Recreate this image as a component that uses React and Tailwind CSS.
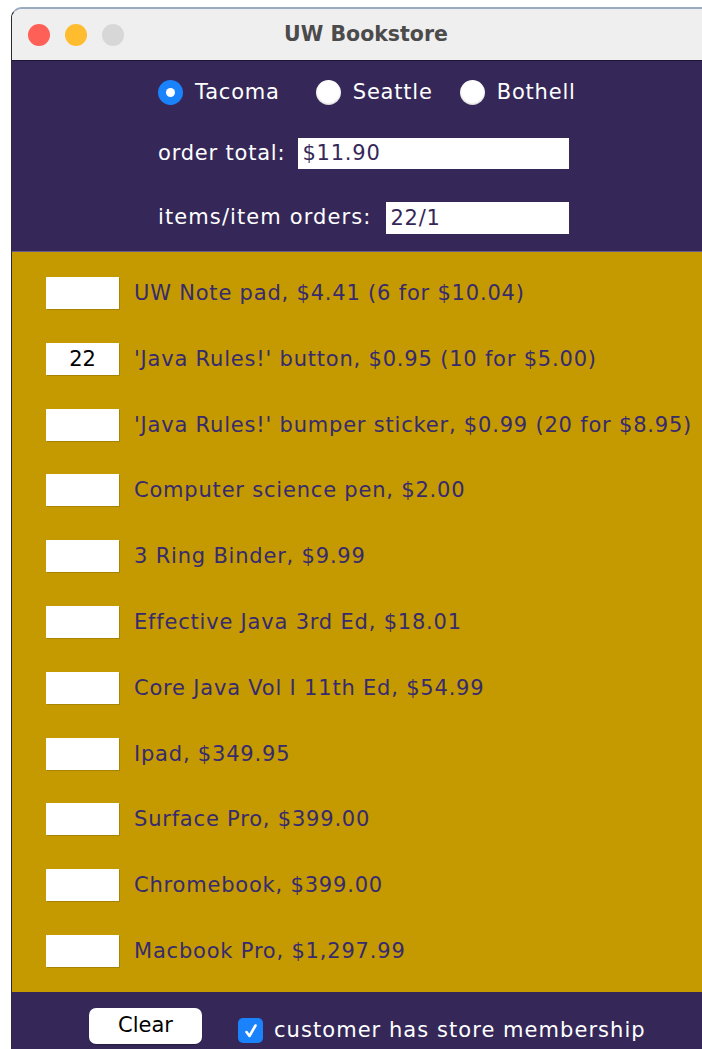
import React, { useState } from 'react';

const ITEMS = [
  { label: 'UW Note pad, $4.41 (6 for $10.04)', qty: '' },
  { label: "'Java Rules!' button, $0.95 (10 for $5.00)", qty: '22' },
  { label: "'Java Rules!' bumper sticker, $0.99 (20 for $8.95)", qty: '' },
  { label: 'Computer science pen, $2.00', qty: '' },
  { label: '3 Ring Binder, $9.99', qty: '' },
  { label: 'Effective Java 3rd Ed, $18.01', qty: '' },
  { label: 'Core Java Vol I 11th Ed, $54.99', qty: '' },
  { label: 'Ipad, $349.95', qty: '' },
  { label: 'Surface Pro, $399.00', qty: '' },
  { label: 'Chromebook, $399.00', qty: '' },
  { label: 'Macbook Pro, $1,297.99', qty: '' },
];

// campus name + left margin before its radio
const CAMPUSES = [
  { name: 'Tacoma', ml: 'ml-0' },
  { name: 'Seattle', ml: 'ml-[36px]' },
  { name: 'Bothell', ml: 'ml-[27px]' },
];

const font = { fontFamily: '"DejaVu Sans", "Liberation Sans", sans-serif' };

const Radio = ({ checked }) => (
  <span
    className={
      checked
        ? 'flex h-[25px] w-[25px] items-center justify-center rounded-full bg-[#1a82fb]'
        : 'h-[25px] w-[25px] rounded-full bg-white shadow-[inset_0_-1px_2px_rgba(0,0,0,0.2)]'
    }
  >
    {checked && <span className="h-[9px] w-[9px] rounded-full bg-white" />}
  </span>
);

const App = () => {
  const [campus, setCampus] = useState('Tacoma');
  const [member, setMember] = useState(true);

  return (
    <div className="min-h-[1049px] bg-white pt-[7px] pl-[11px]" style={font}>
      <div className="overflow-hidden rounded-tl-[11px] border-t-2 border-l border-t-[#9aabc0] border-l-[#2a2a30]">
        {/* title bar */}
        <div className="relative flex h-[51px] items-center bg-[#efefef]">
          <div className="flex gap-[15px] pl-[16px]">
            <span className="h-[22px] w-[22px] rounded-full bg-[#fe5f57]" />
            <span className="h-[22px] w-[22px] rounded-full bg-[#febc2e]" />
            <span className="h-[22px] w-[22px] rounded-full bg-[#d7d7d7]" />
          </div>
          <div className="absolute inset-0 flex items-center justify-center pl-[18px] text-[20.5px] font-bold text-[#4b4b4b]">
            UW Bookstore
          </div>
        </div>

        {/* campus + totals */}
        <div className="h-[191px] border-t border-[#1c1535] bg-[#352858] text-[21px] tracking-[0.8px] text-white">
          <div className="flex items-center pt-[16px] pl-[146px]">
            {CAMPUSES.map((c) => (
              <button
                key={c.name}
                onClick={() => setCampus(c.name)}
                className={'flex items-center gap-[12px] ' + c.ml}
              >
                <Radio checked={campus === c.name} />
                <span>{c.name}</span>
              </button>
            ))}
          </div>
          <div className="mt-[29px] flex items-center pl-[146px]">
            <span>order total:</span>
            <div className="ml-[13px] h-[31px] w-[271px] bg-white pl-[4px] leading-[31px] text-[#352858]">
              $11.90
            </div>
          </div>
          <div className="mt-[33px] flex items-center pl-[146px]">
            <span className="tracking-[1.1px]">items/item orders:</span>
            <div className="ml-[15px] h-[32px] w-[183px] bg-white pl-[4px] leading-[32px] text-[#352858]">
              22/1
            </div>
          </div>
        </div>

        {/* item list */}
        <div className="flex h-[741px] flex-col border-t border-[#6b5a8a] bg-[#c49a00] pt-[25px] text-[21px] tracking-[0.8px] text-[#372a6e]">
          {ITEMS.map((item) => (
            <div key={item.label} className="flex h-[65.8px] shrink-0 items-start">
              <div className="ml-[34px] h-[32px] w-[73px] bg-white text-center leading-[32px] tracking-normal text-black shadow-[1px_1px_0_rgba(0,0,0,0.15)]">
                {item.qty}
              </div>
              <span className="ml-[15px] leading-[32px] whitespace-nowrap">{item.label}</span>
            </div>
          ))}
        </div>

        {/* footer */}
        <div className="flex h-[57px] items-start bg-[#352858] pt-[16px] text-[21px]">
          <button className="ml-[77px] h-[36px] w-[113px] rounded-[7px] bg-white text-black shadow-[0_1px_1px_rgba(0,0,0,0.3)]">
            Clear
          </button>
          <button
            onClick={() => setMember(!member)}
            className="ml-[36px] mt-[7px] flex items-center gap-[11px] tracking-[1.05px] text-white"
          >
            <span className="flex h-[25px] w-[25px] items-center justify-center rounded-[5px] bg-[#1a82fb]">
              {member && (
                <svg width="18" height="18" viewBox="0 0 18 18" fill="none">
                  <path d="M4.5 10 L7.5 14 L13.5 3.5" stroke="white" strokeWidth="2.6" strokeLinecap="round" strokeLinejoin="round" />
                </svg>
              )}
            </span>
            <span>customer has store membership</span>
          </button>
        </div>
      </div>
    </div>
  );
};

export default App;
